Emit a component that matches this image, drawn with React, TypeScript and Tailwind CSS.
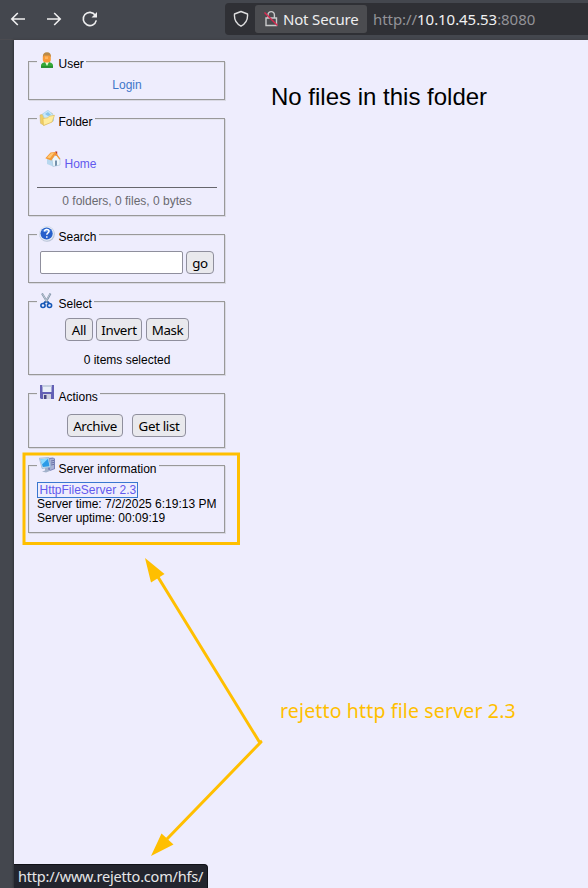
import type { ReactNode } from "react";

function UserIcon() {
  return (
    <svg width="16" height="16" viewBox="0 0 16 16">
      <path d="M2 15.5V12.5Q3 10.5 6 10h4q3 .5 4 2.5v3Z" fill="#35a83a" />
      <path d="M2 14.5h12v1.3H2z" fill="#168320" />
      <path d="m6 10 2 4 2-4Z" fill="#eaffdf" />
      <rect x="3.8" y="1.5" width="8" height="9" rx="3" fill="#f79b38" />
      <path d="M4 5Q3.7.2 8 .2T11.8 5L10.5 3.5H5.2Z" fill="#b98a48" />
      <path d="M6 4.5h3V7H6z" fill="#ffb55e" />
    </svg>
  );
}
function FolderIcon() {
  return (
    <svg width="16" height="16" viewBox="0 0 16 16">
      <path d="m1 5 4-1 2 1.2L13 3l1 8-9 4.3-3.5-2Z" fill="#efce63" stroke="#d4b564" strokeWidth=".6" />
      <path d="M3.5 4 9 .3 14.5 5v6L6 10Z" fill="#c7e8fa" stroke="#9bcbe7" strokeWidth=".6" />
      <path d="m6 4 3-2 3 3-3 1Z" fill="#86c4ec" />
      <path d="m4 8.5 5-.7 1-1.5 5.5-1-2.5 6.8-8.5 3.4Z" fill="#ffec9c" stroke="#dfb955" strokeWidth=".6" />
    </svg>
  );
}
function HomeIcon() {
  return (
    <svg width="16" height="16" viewBox="0 0 16 16">
      <path d="m2 7 5-2 7 2v7l-6 1.5L2 13Z" fill="#b8d8ef" />
      <path d="m7 8 4-5 4 5v6l-7 1.5Z" fill="#edf6fc" stroke="#9abbd3" strokeWidth=".5" />
      <path d="M10.2.5h2v4h-2z" fill="#b83226" />
      <path d="M.3 7.2 5.6 1.4 10.5 1 15.5 8l-1.2.5-3.8-5-4.2 6Z" fill="#f59a36" />
      <path d="m2 6.5 4-4.3 3-.3-4 5.3Z" fill="#ffc875" />
      <path d="M10 9.5h2v5l-2 .5z" fill="#7592ad" />
    </svg>
  );
}
function HelpIcon() {
  return (
    <svg width="16" height="16" viewBox="0 0 16 16">
      <circle cx="8" cy="8" r="7.8" fill="#b8c3d6" />
      <circle cx="7.6" cy="7.5" r="7.3" fill="#e4ebf6" />
      <circle cx="7.6" cy="7.5" r="6.1" fill="#2860cb" />
      <path d="M3 5Q7.5 0 12 5 8 7 3 5Z" fill="#5c91e7" />
      <path d="M5.5 5.5q.2-2 2.2-2 2.3 0 2.3 1.8c0 1.7-2.2 1.6-2.2 3.5M7.8 10.2v1.6" fill="none" stroke="#fff" strokeWidth="1.5" />
    </svg>
  );
}
function ScissorsIcon() {
  return (
    <svg width="16" height="16" viewBox="0 0 16 16">
      <path d="m3 .5 5.5 9M11.5.5 6.5 9.5" stroke="#8294a8" strokeWidth="2" />
      <path d="m3.5 1 4 7M11 1 7 8" stroke="#d1dae4" strokeWidth=".7" />
      <path d="m6.5 8.5-2 2.5M8.5 8.5l2 2.5" stroke="#1557b7" strokeWidth="2" />
      <ellipse cx="4" cy="12.5" rx="2.1" ry="2" fill="none" stroke="#1557b7" strokeWidth="1.6" />
      <ellipse cx="10.5" cy="12.5" rx="2.1" ry="2" fill="none" stroke="#1557b7" strokeWidth="1.6" />
    </svg>
  );
}
function DiskIcon() {
  return (
    <svg width="16" height="16" viewBox="0 0 16 16">
      <path d="M1 0h14v14H2l-1-1Z" fill="#6360b5" />
      <path d="M3.5 0h9v7h-9z" fill="#e9eff8" />
      <path d="M3.5 0h9v2h-9z" fill="#c5cfdf" />
      <path d="M4 9h8v5H4z" fill="#d0d1df" />
      <path d="M5 10h2.5v4H5z" fill="#494682" />
    </svg>
  );
}
function ComputerIcon() {
  return (
    <svg width="16" height="16" viewBox="0 0 16 16">
      <path d="m9 1 5-.5 2 1.2V12l-5 2-2-1Z" fill="#7883ba" />
      <path d="m11 2 4-.6v10L11 13Z" fill="#a8b1d6" />
      <path d="m12 4 3-.6M12 6l3-.6M12 8l3-.6" stroke="#6b75a8" />
      <path d="m.3 1.2 9.5-.7 2 9.8-8.7 1.2Z" fill="#c8ddf0" stroke="#88a9cb" strokeWidth=".6" />
      <path d="m1.5 2.3 7.5-.6 1.5 7.6-6.7.8Z" fill="#2b9be8" />
      <path d="m1.5 2.3 7.5-.6L3 7.5Z" fill="#8cdaff" />
      <path d="m6 11 3-.5v2l3 1-5 2-4-1 3-1Z" fill="#a2b2cb" />
    </svg>
  );
}

interface PanelProps {
  icon: ReactNode;
  title: string;
  size: string;
  iconPad?: string;
  textPad?: string;
  children: ReactNode;
}

function Panel({ icon, title, size, iconPad = "pt-[2px]", textPad = "pt-[6px]", children }: PanelProps) {
  return (
    <section className={`w-[197px] border border-[#999999] shadow-[1px_1px_0_#d9d9e3,inset_1px_1px_0_#e4e4ee] ${size}`}>
      <h2 className="ml-2 -mt-[11px] flex h-[22px] w-fit items-start bg-[#eeedfd] pr-[2px] pl-[2px]">
        <span className={`block ${iconPad}`}>{icon}</span>
        <span className={`ml-[3.5px] leading-[14px] ${textPad}`}>{title}</span>
      </h2>
      {children}
    </section>
  );
}

function Button({ children, width }: { children: ReactNode; width: string }) {
  return (
    <button className={`h-[23px] shrink-0 rounded-[4px] border border-[#8f8f9d] bg-[#e9e9ed] p-0 text-center font-['Noto_Sans',sans-serif] text-[13.33px] leading-[22px] tracking-[-0.35px] whitespace-nowrap ${width}`}>
      {children}
    </button>
  );
}

export default function App() {
  return (
    <div className="relative flex h-[888px] w-[588px] flex-col overflow-hidden bg-[#44474e] font-['Liberation_Sans',Arial,sans-serif] text-xs text-black">
      <header className="flex h-10 shrink-0 items-start border-b border-[#4b4b50] font-['Noto_Sans',sans-serif]">
        <svg className="shrink-0" width="225" height="39" viewBox="0 0 225 39" fill="none" stroke="#efeff0" strokeWidth="1.6">
          <path d="M25 19H11.8m6-6-6 6 6 6M47 19h13.2m-6-6 6 6-6 6" />
          <path d="M95.3 15.2a6.6 6.6 0 1 0 1 5.2" />
          <path d="M97 12v5.5h-5.5Z" fill="#efeff0" stroke="none" />
        </svg>
        <div className="mt-[3px] flex h-8 flex-1 items-center rounded-l-[4px] bg-[#2f3035]">
          <svg className="ml-2 shrink-0" width="16" height="18" viewBox="0 0 16 18" fill="none" stroke="#dededf" strokeWidth="1.4">
            <path d="M8 1.5 14.5 4c.5 5.5-1.3 9.5-6.5 12.2C2.8 13.5 1 9.5 1.5 4Z" strokeLinejoin="round" />
          </svg>
          <div className="ml-[6px] flex h-7 w-28 items-center rounded-[3px] bg-[#4b4c50]">
            <svg className="ml-[9px] shrink-0" width="15" height="18" viewBox="0 0 15 18" fill="none">
              <path d="M2 8h10.5v7.5H2ZM4 8V4.8a3.2 3.2 0 0 1 6.4 0V8" stroke="#c9c9ca" strokeWidth="1.4" />
              <path d="m.5 2.5 13 13" stroke="#db2850" strokeWidth="1.4" />
            </svg>
            <span className="ml-[4px] text-[15px] leading-5 tracking-[-0.18px] whitespace-nowrap text-[#eeeeef]">Not Secure</span>
          </div>
          <div className="ml-[6px] text-[15px] leading-5 tracking-[-0.06px] whitespace-nowrap text-[#939398]">
            http://<span className="text-[#f1f1f2]">10.10.45.53</span>:8080
          </div>
        </div>
      </header>

      <main className="ml-[14px] flex flex-1 bg-[#eeedfd] shadow-[-1px_0_2px_#303238]">
        <aside className="ml-[14px] w-[197px] shrink-0 pt-[21px]">
          <Panel icon={<UserIcon />} title="User" size="h-[39px]" iconPad="pt-px">
            <p className="mt-[5px] pl-px text-center leading-[14px] text-[#4076c9]">Login</p>
          </Panel>
          <Panel icon={<FolderIcon />} title="Folder" size="mt-[18px] h-[98px]" textPad="pt-[7px]">
            <div className="mt-[21px] ml-4 flex h-5 items-start text-[#6259ed]">
              <HomeIcon /><span className="ml-[3.5px] pt-[6px] leading-[14px]">Home</span>
            </div>
            <div className="mr-[7px] ml-2 mt-[16px] border-t border-[#66666c] pt-[6px] text-center leading-[14px] text-[#6a6a70]">0 folders, 0 files, 0 bytes</div>
          </Panel>
          <Panel icon={<HelpIcon />} title="Search" size="mt-[18px] h-[49px]">
            <div className="mt-[5px] ml-[11px] flex items-start gap-[3px]">
              <input aria-label="Search" className="h-[23px] w-[143px] rounded-[2px] border border-[#8f8f9d] bg-white" />
              <Button width="w-7">go</Button>
            </div>
          </Panel>
          <Panel icon={<ScissorsIcon />} title="Select" size="mt-[18px] h-[74px]">
            <div className="mt-[5px] ml-9 flex items-start">
              <Button width="w-7">All</Button>
              <Button width="ml-[3px] w-[46px]">Invert</Button>
              <Button width="ml-1 w-[43px]">Mask</Button>
            </div>
            <p className="mt-3 pl-px text-center leading-[14px]">0 items selected</p>
          </Panel>
          <Panel icon={<DiskIcon />} title="Actions" size="mt-[18px] h-[55px]" textPad="pt-[7px]">
            <div className="mt-[9px] ml-[38px] flex items-start gap-[9px]">
              <Button width="w-14">Archive</Button>
              <Button width="w-[54px]">Get list</Button>
            </div>
          </Panel>
          <Panel icon={<ComputerIcon />} title="Server information" size="mt-[17px] h-[68px]" textPad="pt-[7px]">
            <div className="mt-[5px] ml-2 leading-[14px] whitespace-nowrap">
              <a className="flex h-4 w-[101px] items-center border border-[#3977cf] pl-[1.5px] text-[#6259ed]">HttpFileServer 2.3</a>
              <p className="-mt-px">Server time: 7/2/2025 6:19:13 PM</p>
              <p>Server uptime: 00:09:19</p>
            </div>
          </Panel>
        </aside>
        <h1 className="mt-[42px] ml-[46px] text-2xl leading-[30px]">No files in this folder</h1>
      </main>

      <svg className="pointer-events-none absolute inset-0" width="588" height="888" viewBox="0 0 588 888" fill="none">
        <rect x="24" y="454" width="214.5" height="89.5" stroke="#ffbf00" strokeWidth="3" />
        <path d="m158 577 102 166-93 96M259 743l3-2" stroke="#ffbf00" strokeWidth="3" />
        <path d="m145 558 19.5 16-13.5 8.5ZM151 856l10.5-22.5 12 11Z" fill="#ffbf00" />
      </svg>
      <p className="absolute top-[698px] left-[280px] font-['Noto_Sans',sans-serif] text-[19.5px] leading-[26px] tracking-[0.15px] whitespace-nowrap text-[#ffbf00]">rejetto http file server 2.3</p>
      <div className="absolute bottom-0 left-[14px] h-6 w-[194px] rounded-tr-[4px] border-t border-r border-[#111218] bg-[#23252e] pl-1 font-['Noto_Sans',sans-serif] text-[14.5px] leading-[23px] tracking-[-0.19px] whitespace-nowrap text-[#e7e7e8]">http://www.rejetto.com/hfs/</div>
    </div>
  );
}
